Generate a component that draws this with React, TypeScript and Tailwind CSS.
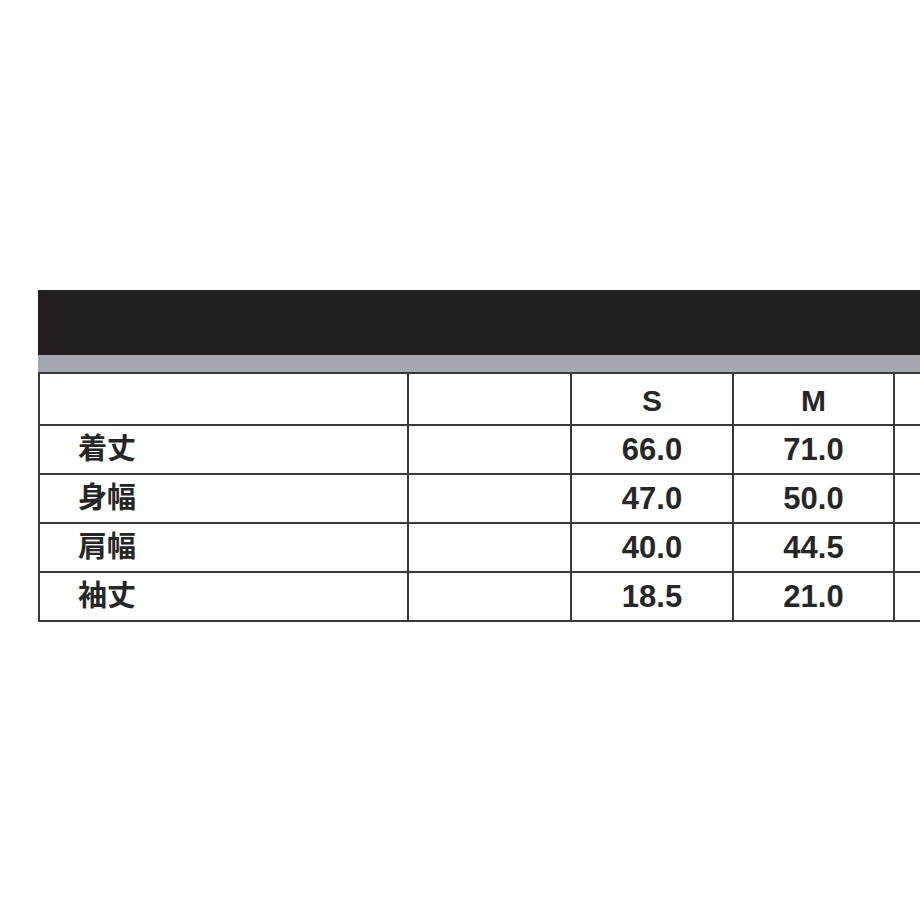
const rows: Array<[string, string, string]> = [
  ['着丈', '66.0', '71.0'],
  ['身幅', '47.0', '50.0'],
  ['肩幅', '40.0', '44.5'],
  ['袖丈', '18.5', '21.0'],
];

const font = { fontFamily: '"Liberation Sans", "Noto Sans CJK JP", sans-serif' };

export default function App() {
  return (
    <div className="h-[920px] w-[920px] overflow-hidden bg-white pl-[38px] pt-[290px]" style={font}>
      <div className="w-[1200px]">
        <div className="h-[65px] bg-[#231f20]" />
        <div className="h-[17px] bg-[#a5a8ae]" />
        <table className="w-[1018px] table-fixed border-collapse text-[#262626]">
          <colgroup>
            <col className="w-[369px]" />
            <col className="w-[163px]" />
            <col className="w-[162px]" />
            <col className="w-[161px]" />
            <col className="w-[163px]" />
          </colgroup>
          <thead>
            <tr className="h-[52px]">
              <th className="border-2 border-[#3a3a3a]" />
              <th className="border-2 border-[#3a3a3a]" />
              <th className="border-2 border-[#3a3a3a] pt-[4px] text-center text-[30px] font-bold leading-none">S</th>
              <th className="border-2 border-[#3a3a3a] pt-[4px] text-center text-[30px] font-bold leading-none">M</th>
              <th className="border-2 border-[#3a3a3a]" />
            </tr>
          </thead>
          <tbody>
            {rows.map(([label, s, m]) => (
              <tr key={label} className="h-[49px]">
                <td className="border-2 border-[#3a3a3a] pl-[38px] text-[29px] font-bold leading-none">{label}</td>
                <td className="border-2 border-[#3a3a3a]" />
                <td className="border-2 border-[#3a3a3a] text-center text-[31px] font-bold leading-none">{s}</td>
                <td className="border-2 border-[#3a3a3a] text-center text-[31px] font-bold leading-none">{m}</td>
                <td className="border-2 border-[#3a3a3a]" />
              </tr>
            ))}
          </tbody>
        </table>
      </div>
    </div>
  );
}
